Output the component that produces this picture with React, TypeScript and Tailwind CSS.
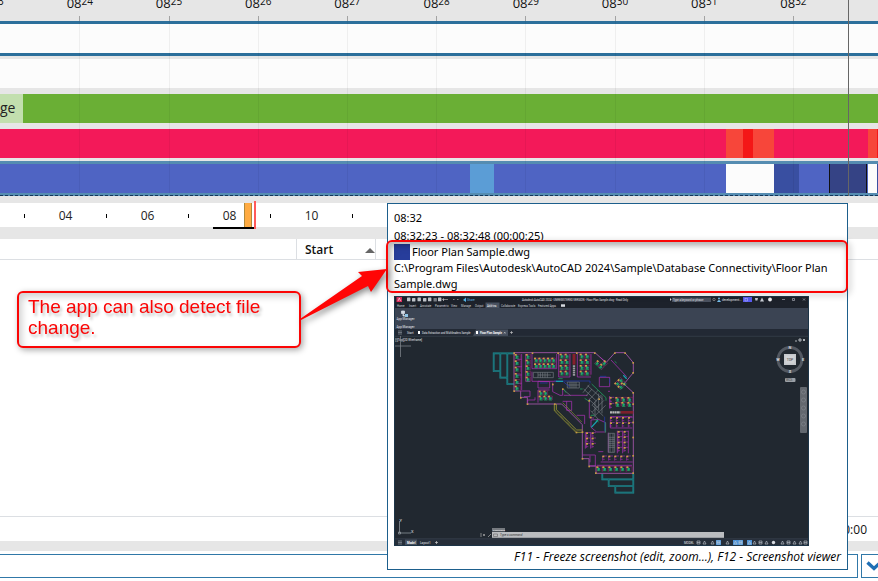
import type { ReactNode } from "react";
import clsx from "clsx";

interface Segment {
  span: number;
  color: string;
  label?: string;
}

interface Track {
  id: string;
  wrap: string;
  segments: Segment[];
}

const MINUTES = ["23", "24", "25", "26", "27", "28", "29", "30", "31", "32"];

const TRACKS: Track[] = [
  {
    id: "computer",
    wrap: "border-y-3 border-[#2c6f9b]",
    segments: [{ span: 878, color: "bg-[#fcfcfc]" }],
  },
  {
    id: "tags",
    wrap: "mt-[3px]",
    segments: [{ span: 878, color: "bg-[#fcfcfc]" }],
  },
  {
    id: "usage",
    wrap: "mt-1.5",
    segments: [
      { span: 23, color: "bg-[#c2dfae]", label: "ge" },
      { span: 855, color: "bg-[#6aaf35]" },
    ],
  },
  {
    id: "applications",
    wrap: "mt-1.5",
    segments: [
      { span: 726, color: "bg-[#f31959]" },
      { span: 17, color: "bg-[#f7463a]" },
      { span: 10, color: "bg-[#f41717]" },
      { span: 21, color: "bg-[#f7463a]" },
      { span: 94, color: "bg-[#f31959]" },
      { span: 9, color: "bg-[#f7463a]" },
      { span: 1, color: "bg-[#f41717]" },
    ],
  },
  {
    id: "documents",
    wrap: "mt-[3px] border-y-3 border-[#558cb1]",
    segments: [
      { span: 470, color: "bg-[#4f64c3]" },
      { span: 24, color: "bg-[#5b9dd6]" },
      { span: 232, color: "bg-[#4f64c3]" },
      { span: 48, color: "bg-[#fcfcfc]" },
      { span: 25, color: "bg-[#394fa1]" },
      { span: 30, color: "bg-[#4f64c3]" },
      { span: 38, color: "bg-[#354385] shadow-[inset_1px_0_#111,inset_-1px_0_#111]" },
      { span: 1, color: "bg-[#4f64c3]" },
      { span: 9, color: "bg-[#fcfcfc]" },
      { span: 1, color: "bg-[#394fa1]" },
    ],
  },
];

const HOURS = ["", "04", "", "06", "", "08", "", "10", ""];

function TrackRow({ wrap, segments }: Track) {
  return (
    <div className={clsx("flex", wrap)}>
      {segments.map((s, i) => (
        <div
          key={i}
          className={clsx("h-[29px] min-w-0 basis-0 text-sm leading-[28px] text-[#222]", s.color)}
          style={{ flexGrow: s.span }}
        >
          {s.label}
        </div>
      ))}
    </div>
  );
}

function Timeline() {
  return (
    <section className="relative overflow-hidden pb-[7px]">
      <div className="h-[21px] overflow-hidden">
        <div className="-mt-2 flex">
          {MINUTES.map((m) => (
            <div key={m} className="flex w-[10.16%] shrink-0 justify-center text-[#111] first:-ml-[54px]">
              <span className="text-[13px] leading-[22px]">08</span>
              <span className="text-[10px] leading-[18px]">{m}</span>
            </div>
          ))}
        </div>
      </div>
      {TRACKS.map((t) => (
        <TrackRow key={t.id} {...t} />
      ))}
      <div className="-mt-px border-t border-dashed border-[#12365a]" />

      <div className="absolute inset-x-0 top-4 flex">
        {MINUTES.map((m) => (
          <div key={m} className="flex w-[10.16%] shrink-0 flex-col items-end first:-ml-[98px]">
            <div className="h-[5px] w-px bg-[#a3a3a3]" />
            <div className="h-[172px] w-px bg-black/5" />
          </div>
        ))}
      </div>
      <div className="absolute top-0 right-[29px] h-[196px] w-px bg-[#666]" />
    </section>
  );
}

function DayScale() {
  return (
    <div className="relative flex h-6 bg-white">
      <div className="flex min-w-0 flex-1 items-center overflow-hidden pt-0.5 pl-1 text-xs text-[#222]">
        {HOURS.map((h, i) => (
          <div key={i} className="flex w-[41px] shrink-0 justify-center">
            {h || <span className="h-1 w-px bg-black" />}
          </div>
        ))}
      </div>
      <div className="absolute top-0 left-[244px] h-6 w-2 border-x border-[#b08a3c] bg-[#ffab42]" />
      <div className="absolute top-6 left-[213px] h-0.5 w-[41px] bg-black" />
      <div className="absolute -top-0.5 left-[254px] h-7 w-0.5 bg-[#ff5a5a]" />
    </div>
  );
}

function ActivityTable() {
  return (
    <section className="mt-3 flex flex-1 flex-col bg-white">
      <table className="w-full table-fixed border-separate border-spacing-0 text-xs">
        <thead>
          <tr>
            <th className="h-[21px] w-[297px] border-r border-b border-[#dcdfe3] p-0" aria-label="Name" />
            <th className="w-[79px] border-r border-b border-[#dcdfe3] p-0 text-left font-semibold">
              <span className="flex items-center justify-between pt-0.5 pl-2 leading-4">
                Start
                <svg className="h-[5px] w-2.5" viewBox="0 0 10 5" fill="#666">
                  <path d="M5 0 10 5H0Z" />
                </svg>
              </span>
            </th>
            <th className="border-b border-[#dcdfe3] p-0" aria-label="Duration" />
          </tr>
        </thead>
      </table>
      <div className="flex-1" />
      <div className="border-t border-[#dcdfe3] pt-0.5 pr-[11px] text-right text-xs leading-[22px]">00:00:00</div>
    </section>
  );
}

function NotesBar() {
  return (
    <div className="mt-2.5 flex gap-[3px] overflow-hidden bg-white py-[3px]">
      <input
        type="text"
        aria-label="Notes"
        className="h-6 min-w-0 flex-1 border border-l-0 border-[#3078a8] bg-white px-2 text-xs outline-none"
      />
      <button
        type="button"
        aria-label="Expand"
        className="flex h-6 w-[17px] shrink-0 items-center overflow-hidden border border-r-0 border-[#3078a8] bg-white pl-1"
      >
        <svg className="h-2.5 w-4 shrink-0" viewBox="0 0 16 10" fill="none" stroke="#1f6fb5" strokeWidth="3.4">
          <path d="m1.5 1.5 6.5 6 6.5-6" />
        </svg>
      </button>
    </div>
  );
}

interface DesksProps {
  x: number;
  y: number;
  cols: number;
  rows: number;
  dx?: number;
  dy?: number;
  kind?: "desk" | "office";
}

function Desks({ x, y, cols, rows, dx = 15, dy = 16, kind = "desk" }: DesksProps) {
  const cells: ReactNode[] = [];
  for (let r = 0; r < rows; r++) {
    for (let c = 0; c < cols; c++) {
      cells.push(
        <g key={`${r}-${c}`} transform={`translate(${x + c * dx} ${y + r * dy})`}>
          {kind === "desk" ? (
            <>
              <path d={`M0 0H${dx - 2}V${dy - 3}M0 0V${dy - 3}`} stroke="#8c2468" />
              <rect x="2" y="4" width="8" height="6" fill="#169a5c" stroke="none" />
              <path d="M1 12H11M5 2V12" stroke="#25bd72" strokeWidth="2" />
              <path d="M9 4V9" stroke="#2d6aa8" />
            </>
          ) : (
            <path d={`M0 0V${dy - 2}M0 0H${dx - 5}M0 ${dy - 6}H6`} stroke="#a42cae" strokeWidth="2" />
          )}
          <rect x="-1" y="-1" width="6" height="5" fill="#cf9d45" stroke="none" />
        </g>
      );
    }
  }
  return <>{cells}</>;
}

const COLUMNS: [number, number][] = [
  [100, 37], [155, 37], [232, 37], [288, 37], [342, 37], [402, 37], [433, 37], [457, 66], [457, 96], [430, 130],
  [457, 156], [457, 190], [457, 245], [457, 290], [457, 345], [457, 397], [345, 397], [325, 377], [305, 354],
  [100, 151], [120, 171], [140, 190], [222, 190], [287, 275], [246, 145], [216, 131], [305, 274], [330, 230],
  [355, 175], [325, 180],
];

function FloorPlan() {
  return (
    <g transform="translate(86 44) scale(.3333)" fill="none" strokeWidth="1.8">
      <g stroke="#1b9aa0" strokeWidth="5">
        <path d="M102 40H41V93H61V40M61 93V113H82V40M82 113V132H102" />
        <path d="M367 402V418H460M386 418V438H460M406 438V458H460V402" />
      </g>
      <g stroke="#1f3a44" strokeWidth="1.4">
        <path d="M102 40H41V93H61V40M61 93V113H82V40M82 113V132H102" />
        <path d="M367 402V418H460M386 418V438H460M406 438V458H460V402" />
      </g>
      <path
        d="M102 38H345L378 68 405 38H435L460 68V98L432 132 460 158V400H348V378H327V356H307V254L245 192H142V172H122V153H102Z"
        stroke="#94509b"
        strokeWidth="3"
      />
      <path d="M223 192V212L288 277H307M229 192V209L290 270H307" stroke="#a3a232" strokeWidth="2.4" />
      <path d="M226 211 289 274" stroke="#5e6030" strokeDasharray="2 3" strokeWidth="4" />

      <g stroke="#a832b4" strokeWidth="2.2">
        <path d="M125 42V150M125 58H112M125 80H112M125 105H112M125 130H112M137 42V124H151M156 42V86H230V42" />
        <path d="M236 42V111H270M292 42V111H333M270 42V111M333 42V104M156 95V124H230" />
        <path d="M123 153H150V170H132M143 192V180H165V172M174 124V144H209V125Z" />
        <path d="M174 150V188M174 150H209M218 128V155L240 166H248V146M251 166H323M248 184H275V211H260V184" />
        <path d="M358 112H389V140H358ZM389 168V205M391 230H457M391 246V264H457M385 278V338" />
        <path d="M316 276V326M332 276V326M412 272V340M428 272V340M445 272V340M307 345H346V378H327M330 347V367" />
        <path d="M290 226H314V252M328 176V234H342M333 240V262L350 276H377V248L355 238Z" />
        <path d="M393 60 440 110M361 52 378 67M390 154H384M355 335H370M362 366H458M350 376H456" />
      </g>
      <g stroke="#757b83" strokeWidth="2">
        <path d="M160 97H220V113H160ZM174 97V113M181 97V113M188 97V113M195 97V113M202 97V113M174 105H213" />
        <path d="M262 126H298V144H262ZM270 126V144M276 126V144M282 126V144M288 126V144M262 135H298" />
        <path d="M253 151 272 167M309 158 328 134M318 168 336 147M328 179 355 150M336 196 365 164M337 216 372 181M342 230 377 196" />
        <path d="M311 147 350 184M323 137 368 178M328 179 355 204M337 196 370 228M332 212 355 238M345 185V225M356 161V211M366 167V220" />
        <path d="M385 280H404V337H385ZM390 280V337M399 280V337M385 292H404M385 298H404M385 304H404M385 310H404M385 316H404M385 322H404" />
        <path d="M248 188 305 246" stroke="#8d8f38" />
      </g>
      <g stroke="#2638a4" strokeWidth="2.4">
        <path d="M222 123H330V130M180 129H203M360 109H379M389 116V130M374 230V273M250 125 270 142" />
      </g>
      <path d="M228 124H249M334 262 354 240M430 106 440 116" stroke="#189fb0" strokeWidth="4" />
      <g stroke="#21965a" strokeWidth="2.6">
        <path d="M235 116H248M300 147H308M335 132 378 173V182M332 226H343M345 238 356 246M376 247V278M314 175 330 186M251 147 258 158M404 64 410 69" />
      </g>
      <path d="M282 42V74" stroke="#86212b" strokeWidth="9" />
      <path d="M282 76V108" stroke="#99979c" strokeWidth="7" strokeDasharray="5 1.5" />
      <path d="M422 217H460" stroke="#7b202d" strokeWidth="8" />
      <path d="M390 217H421" stroke="#b8b8b8" strokeWidth="7" strokeDasharray="6 1" />

      <Desks x={105} y={43} cols={1} rows={6} dx={18} dy={19} />
      <Desks x={138} y={43} cols={1} rows={5} dx={16} dy={17} />
      <Desks x={163} y={54} cols={5} rows={2} dx={13} dy={17} />
      <Desks x={240} y={42} cols={2} rows={4} dx={15} dy={17} />
      <Desks x={300} y={42} cols={2} rows={4} dx={16} dy={17} />
      <Desks x={177} y={153} cols={2} rows={2} dx={14} dy={15} />
      <Desks x={205} y={168} cols={1} rows={1} dx={14} dy={15} />
      <Desks x={407} y={172} cols={3} rows={2} dx={18} dy={15} />
      <Desks x={390} y={172} cols={1} rows={2} dx={18} dy={18} kind="office" />
      <Desks x={350} y={380} cols={6} rows={1} dx={18} dy={18} />
      <g transform="rotate(45 362 76)">
        <Desks x={345} y={72} cols={2} rows={1} />
        <Desks x={360} y={57} cols={1} rows={1} />
      </g>
      <g transform="rotate(-45 421 130)">
        <Desks x={408} y={118} cols={2} rows={2} dx={14} dy={14} />
      </g>
      <Desks x={391} y={232} cols={4} rows={2} dx={18} kind="office" />
      <Desks x={319} y={278} cols={2} rows={3} dx={17} kind="office" />
      <Desks x={414} y={274} cols={2} rows={4} dx={18} kind="office" />
      <Desks x={368} y={348} cols={5} rows={1} dx={18} kind="office" />

      <g fill="#c79a44">
        {COLUMNS.map(([x, y]) => (
          <rect key={`${x}-${y}`} x={x} y={y} width="5" height="5" />
        ))}
      </g>
    </g>
  );
}

const RIBBON_TABS: [string, number][] = [
  ["Home", 3],
  ["Insert", 15],
  ["Annotate", 26],
  ["Parametric", 41],
  ["View", 57],
  ["Manage", 67],
  ["Output", 81],
  ["Add-ins", 93],
  ["Collaborate", 107],
  ["Express Tools", 124],
  ["Featured Apps", 144],
];

function CadThumbnail() {
  return (
    <svg
      className="block h-[250px] w-[415px]"
      viewBox="0 0 415 250"
      role="img"
      aria-label="Floor Plan Sample.dwg"
      fontFamily="Roboto, 'Open Sans', sans-serif"
      fontSize="3"
      fill="#e2e5ea"
    >
      <rect width="415" height="250" fill="#212830" />
      <rect width="415" height="12" fill="#1d222b" />
      <rect x="2.5" y="1" width="5.5" height="5" fill="#dc2f5e" />
      <path d="m4 5 1.3-3L6.6 5" stroke="#fff" strokeWidth=".6" fill="none" />
      <g fill="#d5d9df">
        {[13, 18, 23.5, 29, 34, 39.5, 44].map((x, i) => (
          <rect key={x} x={x} y={i % 2 ? 2 : 1.6} width="3.4" height="3.6" rx=".5" opacity={i === 5 ? 0.5 : 0.9} />
        ))}
        <path d="M49 3.5h5M50 2.5l-1.5 1L50 5M59 3.5h1.5M63 3.5h1.5" stroke="#aaa" strokeWidth=".7" />
      </g>
      <path d="m69 4 3-2.5V6Z" fill="#55b9e8" />
      <text x="73" y="4.8" fill="#5fb4e6">Share</text>
      <text x="128" y="4.8" fontSize="2.7">
        Autodesk AutoCAD 2024 - UNREGISTERED VERSION - Floor Plan Sample.dwg - Read Only
      </text>
      <path d="m276 2 1.5 1.5L276 5Z" />
      <rect x="278" y="1.5" width="39" height="4.5" fill="#4b5260" />
      <text x="279" y="4.7" fontSize="2.7">Type a keyword or phrase</text>
      <circle cx="320" cy="3.5" r="1.2" fill="none" stroke="#aaa" strokeWidth=".6" />
      <path d="M323 6q2-4 4 0ZM324 2.5a1 1 0 1 0 2 0 1 1 0 1 0-2 0" fill="#75c0ef" />
      <text x="328" y="4.8">development...</text>
      <rect x="349" y="1" width="9" height="5" fill="#5a5cf0" />
      <rect x="351" y="2.5" width="2.5" height="2.5" fill="none" stroke="#c8caff" strokeWidth=".5" />
      <path d="M361 2h3l-.6 2.5h-2ZM366 5.5l2-4 2 4Z" fill="#c9ced6" />
      <circle cx="376" cy="3.5" r="1.9" fill="#eef0f3" />
      <path d="M388 3.5h3M398.5 2.5h2v2h-2ZM409 2.500l2 2m0-2-2 2" stroke="#bfc4cc" strokeWidth=".6" fill="none" />

      <rect x="91.5" y="6.5" width="14" height="5.5" fill="#485160" />
      {RIBBON_TABS.map(([name, x]) => (
        <text key={name} x={x} y="10.5" fontSize="2.8" fill={name === "Add-ins" ? "#fff" : "#d0d4db"}>
          {name}
        </text>
      ))}
      <rect x="167" y="8.3" width="4" height="2.5" fill="#d5d9df" />

      <rect y="12" width="415" height="21" fill="#3b4453" />
      <path d="M7.5 15h3v2.5h-3ZM9 17.5v2.5h2" stroke="#d4dce5" strokeWidth=".8" fill="#d4dce5" />
      <rect x="11" y="18" width="3" height="3" fill="#8fc6e8" />
      <text x="2.5" y="24">App Manager</text>
      <text x="2.5" y="32">App Manager</text>

      <rect y="33" width="415" height="7" fill="#222934" />
      <path d="M4 35h4M4 36.5h4M4 38h4" stroke="#8b929c" strokeWidth=".7" />
      <text x="13" y="37.5">Start</text>
      <rect x="24" y="35" width="2" height="3" fill="#fff" />
      <text x="28" y="37.5" fontSize="2.7">Data Extraction and Multileaders Sample</text>
      <path d="m79 40 3-6.5h32v6.5Z" fill="#47505f" />
      <rect x="82" y="35" width="2" height="3" fill="#fff" />
      <text x="86" y="37.5" fontSize="2.7" fontWeight="700" fill="#fff">Floor Plan Sample</text>
      <path d="m110 36 1.5 1.5m0-1.5-1.5 1.5M116 36.5h3M117.5 35v3" stroke="#ccc" strokeWidth=".6" />
      <rect y="39.8" width="415" height=".9" fill="#343c48" />
      <text x="1" y="44.5" fontSize="2.8">[-][Top][2D Wireframe]</text>
      <path d="M6.5 40V61M1 50H17" stroke="#858b92" strokeWidth=".7" />
      <path d="M401 45h2M405 43h2v2h-2ZM409 43l2 2m0-2-2 2" stroke="#d2d6da" strokeWidth=".8" fill="none" />

      <FloorPlan />

      <circle cx="396" cy="63.5" r="12" fill="none" stroke="#535962" strokeWidth="2.8" />
      <rect x="390" y="58" width="12" height="11" fill="#c5c8cc" />
      <rect x="391.5" y="59.5" width="9" height="8" fill="#d0d2d5" />
      <text x="396" y="64.8" textAnchor="middle" fontSize="3.5" fill="#333">TOP</text>
      <g fontSize="4" textAnchor="middle" fill="#d7dade" fontWeight="700">
        <text x="396" y="53">N</text>
        <text x="396" y="77">S</text>
        <text x="384" y="65">W</text>
        <text x="409" y="65">E</text>
      </g>
      <rect x="391" y="82" width="10.5" height="4" rx="1" fill="#9ba0a6" />
      <text x="392" y="85" fill="#444">WCS</text>
      <rect x="406" y="91" width="7" height="46" rx="1" fill="#63686f" />
      <g fill="none" stroke="#7d8289" strokeWidth=".8">
        {[96, 104, 112, 120, 128].map((y) => (
          <circle key={y} cx="409.5" cy={y} r="2" />
        ))}
      </g>

      <path d="M5.5 225V237H17M4.5 236h2v2h-2Z" stroke="#9aa0a7" strokeWidth=".7" fill="none" />
      <text x="5.5" y="226" fontSize="4">Y</text>
      <text x="17" y="237" fontSize="4">X</text>
      <rect x="98" y="232" width="13" height="3.5" fill="#777b80" />
      <text x="99" y="234.8" fontSize="2.5" fill="#fff">Command:</text>
      <path d="M87 237v4M89 238l2 2m0-2-2 2M94 241l3-3" stroke="#aaa" strokeWidth=".7" />
      <rect x="98" y="236" width="232" height="5.8" fill="#bbbdc0" />
      <path d="M99.5 238h4v2.5h-4Z" stroke="#666" strokeWidth=".6" fill="none" />
      <text x="106" y="240.2" fill="#333" fontStyle="italic">Type a command</text>

      <rect y="243" width="415" height="7" fill="#262e39" />
      <rect y="242.5" width="415" height=".7" fill="#3a4350" />
      <path d="M4 245h4M4 246.5h4M4 248h4" stroke="#8b929c" strokeWidth=".7" />
      <rect x="11" y="243.5" width="12" height="6" fill="#46505e" />
      <text x="13" y="247.6" fill="#fff" fontWeight="700">Model</text>
      <text x="26" y="247.6">Layout1</text>
      <path d="M41 246.5h3M42.5 245v3" stroke="#ccc" strokeWidth=".7" />
      <text x="290" y="247.6">MODEL</text>
      <g fill="#4e94d8">
        <rect x="322" y="244" width="5" height="5" />
        <rect x="339" y="244" width="10" height="5" />
        <rect x="353" y="244" width="5" height="5" />
      </g>
      <g fill="none" stroke="#c3c9d1" strokeWidth=".6">
        {[303, 309, 317, 323, 332, 340, 345, 354, 359, 365, 371, 387, 393, 399, 405, 410].map((x, i) => (
          <path key={x} d={i % 3 === 0 ? `M${x} 245h3v3h-3ZM${x} 246.5h3` : `M${x} 248l1.5-3 1.5 3Z`} />
        ))}
      </g>
      <circle cx="379.5" cy="246.5" r="1.7" fill="#d8dce2" />
      <rect x=".5" y=".5" width="414" height="249" fill="none" stroke="#1d3548" />
    </svg>
  );
}

function ActivityTooltip() {
  return (
    <div
      role="tooltip"
      className="absolute top-[203px] left-[387px] w-[461px] border border-[#1d5f8c] bg-white px-1.5 pt-1.5 pb-1 font-['Noto_Sans','Open_Sans',sans-serif] text-[11px] leading-4 text-black"
    >
      <p className="mb-0.5">08:32</p>
      <p>08:32:23 - 08:32:48 (00:00:25)</p>
      <p className="flex gap-0.5">
        <span className="size-4 bg-[#273d9b]" />
        Floor Plan Sample.dwg
      </p>
      <p className="mb-1">
        C:\Program Files\Autodesk\AutoCAD 2024\Sample\Database Connectivity\Floor Plan Sample.dwg
      </p>
      <CadThumbnail />
      <p className="mt-[3px] text-right font-['Open_Sans','Noto_Sans',sans-serif] text-xs leading-4 italic">
        F11 - Freeze screenshot (edit, zoom...), F12 - Screenshot viewer
      </p>
    </div>
  );
}

function Callout() {
  return (
    <div className="pointer-events-none absolute inset-0">
      <div className="absolute top-[240px] left-[386px] h-[53px] w-[462px] rounded-md border-2 border-[#fb0505] shadow-[inset_2px_3px_5px_rgba(0,0,0,0.22)] drop-shadow-[2px_2px_3px_rgba(0,0,0,0.35)]" />
      <div className="absolute top-[291px] left-[17px] w-[284px] rounded-md border-2 border-[#fb0505] bg-white shadow-[inset_3px_4px_7px_rgba(0,0,0,0.18)] drop-shadow-[2px_2px_3px_rgba(0,0,0,0.35)]">
        <p className="px-[9px] pt-[3px] pb-2 font-['Liberation_Sans',Arial,sans-serif] text-[19px] leading-[21px] text-[#fb0505] text-shadow-[2px_3px_3px_rgba(0,0,0,0.25)]">
          The app can also detect file change.
        </p>
      </div>
      <svg
        className="absolute top-[264px] left-[300px] h-[60px] w-[90px] drop-shadow-[2px_3px_3px_rgba(0,0,0,0.45)]"
        viewBox="300 264 90 60"
        fill="#ff0505"
      >
        <path d="M300 319 362 276 358 272 387 269 371 292 368 286 301 320Z" />
      </svg>
    </div>
  );
}

export default function App() {
  return (
    <main className="relative flex min-h-screen flex-col overflow-hidden bg-[#e6e6e6] font-['Open_Sans','Noto_Sans',sans-serif] text-[#111]">
      <Timeline />
      <DayScale />
      <ActivityTable />
      <NotesBar />
      <ActivityTooltip />
      <Callout />
    </main>
  );
}
